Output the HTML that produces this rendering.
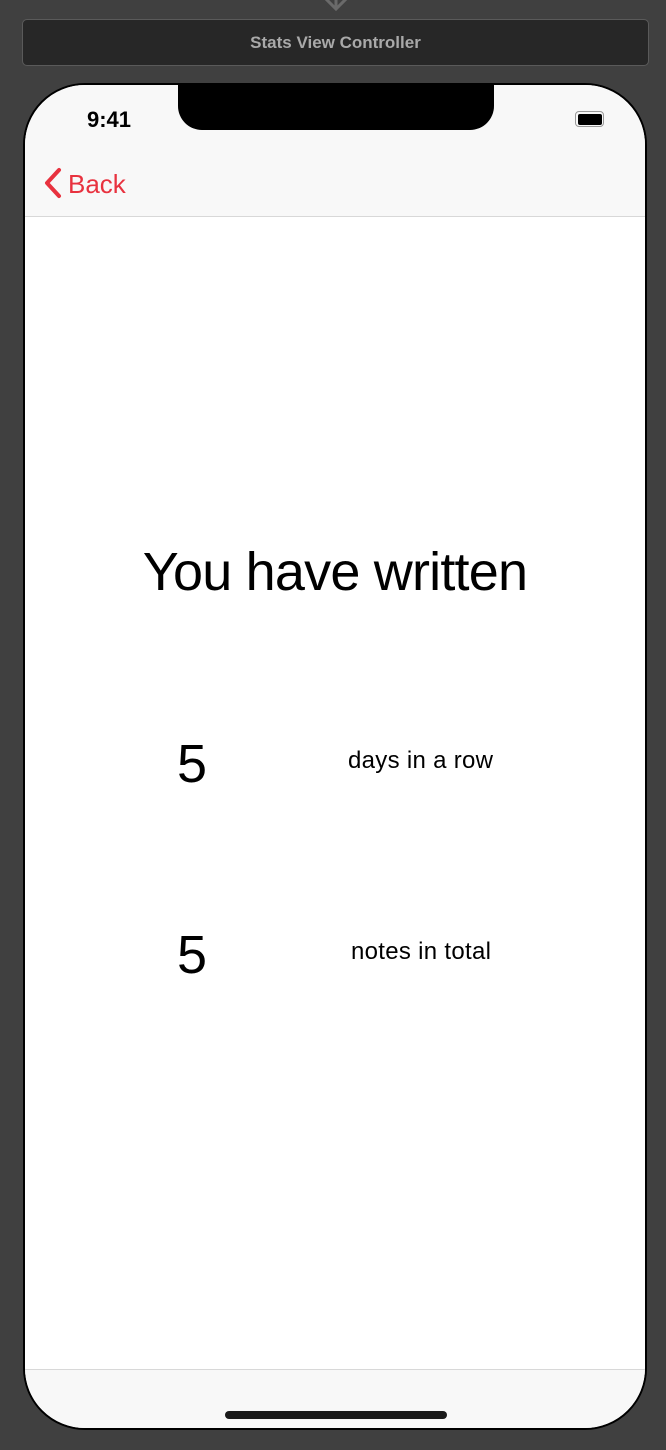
<!DOCTYPE html>
<html><head><meta charset="utf-8"><style>
*{margin:0;padding:0;box-sizing:border-box}
body{width:666px;height:1450px;background:#404040;position:relative;overflow:hidden;font-family:"Liberation Sans",sans-serif}
.bar{position:absolute;left:22px;top:19px;width:627px;height:47px;background:#272727;border:1px solid #5a5a5a;border-radius:5px;color:#a9a9a9;font-weight:bold;font-size:17px;text-align:center;line-height:46px}
.arrow{position:absolute;left:321px;top:-6px;width:30px;height:20px}
.phone{position:absolute;left:23px;top:83px;width:624px;height:1347px;border:2px solid #000;border-radius:62px;background:#fff;overflow:hidden}
.hdr{position:absolute;left:0;top:0;width:100%;height:132px;background:#f8f8f8;border-bottom:1px solid #d8d8d8}
.ftr{position:absolute;left:0;top:1284px;width:100%;height:70px;background:#f8f8f8;border-top:1px solid #d8d8d8}
.notch{position:absolute;left:153px;top:-2px;width:316px;height:47px;background:#000;border-radius:0 0 24px 24px}
.time{position:absolute;left:62px;top:22px;font-size:22px;font-weight:bold;color:#000}
.batt{position:absolute;left:550px;top:26px;width:29px;height:16px;border:1.5px solid #999;border-radius:4px;padding:1.5px}
.batt i{display:block;width:100%;height:100%;background:#000;border-radius:2px}
.back{position:absolute;left:18px;top:82px;color:#e8323f;font-size:26px}
.home{position:absolute;left:200px;top:1326px;width:222px;height:8px;background:#1a1a1a;border-radius:4px}
.t{position:absolute;color:#000;white-space:nowrap}
</style></head><body>
<svg class="arrow" viewBox="0 0 30 20"><path d="M4 4 L15 15 L26 4 M15 0 L15 15" stroke="#6a6a6a" stroke-width="3" fill="none"/></svg>
<div class="bar">Stats View Controller</div>
<div class="phone">
<div class="hdr"></div>
<div class="ftr"></div>
<div class="notch"></div>
<div class="time">9:41</div>
<div class="batt"><i></i></div>
<div class="back"><svg width="20" height="32" viewBox="0 0 20 32" style="vertical-align:-6px;margin-right:5px"><path d="M16 3 L4 16 L16 29" stroke="#e8323f" stroke-width="4" fill="none" stroke-linecap="round" stroke-linejoin="round"/></svg>Back</div>
<div class="t" style="left:0;width:620px;text-align:center;top:456px;font-size:54px;letter-spacing:-0.8px">You have written</div>
<div class="t" style="left:152px;top:648px;font-size:54px">5</div>
<div class="t" style="left:323px;top:662px;font-size:24px;letter-spacing:0.3px">days in a row</div>
<div class="t" style="left:152px;top:839px;font-size:54px">5</div>
<div class="t" style="left:326px;top:853px;font-size:24px;letter-spacing:0.3px">notes in total</div>
<div class="home"></div>
</div>
</body></html>
